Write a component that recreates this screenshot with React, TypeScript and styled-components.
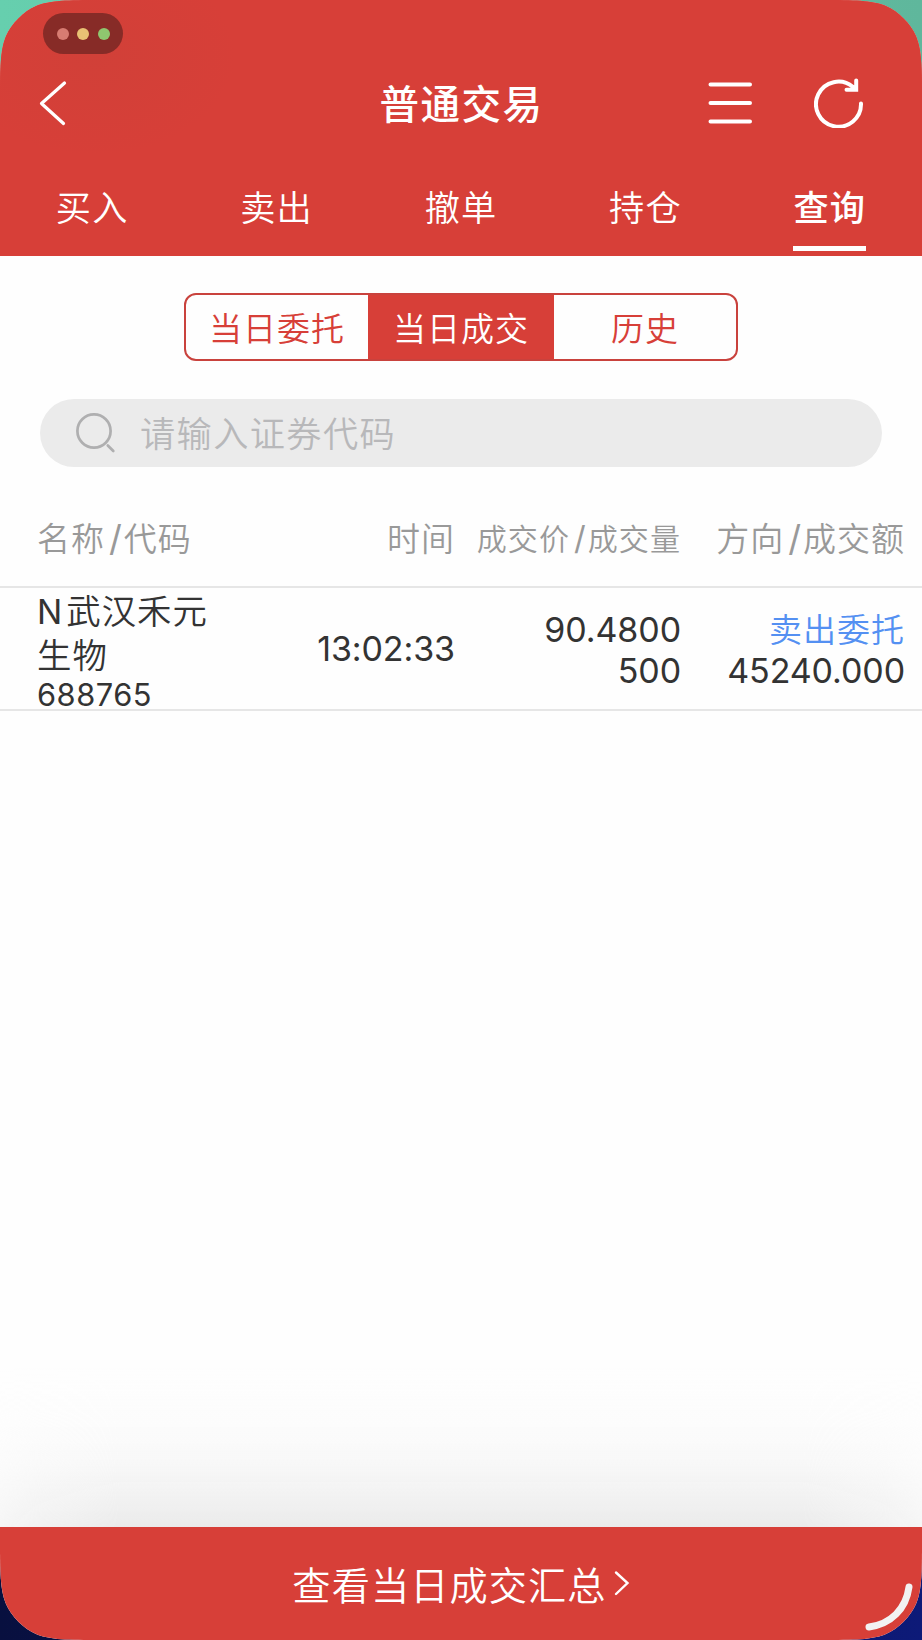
import React from "react";
import styled, { createGlobalStyle } from "styled-components";

const RED = "#d73f38";

const GlobalStyle = createGlobalStyle`
  * { box-sizing: border-box; }
  body { margin: 0; }
  button { font: inherit; letter-spacing: inherit; border: 0; padding: 0; background: none; color: inherit; }
`;

const Desktop = styled.div`
  width: 922px;
  height: 1640px;
  overflow: hidden;
  background:
    linear-gradient(90deg, #66cfae, #5fb79c) top / 100% 50% no-repeat,
    linear-gradient(90deg, #08103f, #0d1a78) bottom / 100% 50% no-repeat;
`;

const Window = styled.main`
  position: relative;
  display: flex;
  flex-direction: column;
  height: 1640px;
  background: #fefefe;
  color: #333;
  font-family: Inter, "Noto Sans CJK SC", sans-serif;
  clip-path: path("M0 95 C0 62 1 48 6 36 C11 24 24 11 36 6 C48 1 62 0 95 0 H827 C860 0 874 1 886 6 C898 11 911 24 916 36 C921 48 922 62 922 95 V1545 C922 1578 921 1592 916 1604 C911 1616 898 1629 886 1634 C874 1639 860 1640 827 1640 H95 C62 1640 48 1639 36 1634 C24 1629 11 1616 6 1604 C1 1592 0 1578 0 1545 Z");
`;

const Header = styled.header`
  height: 256px;
  flex: none;
  padding-top: 61px;
  color: #fff;
  background: radial-gradient(ellipse 140px 100px at 95px 55px, #d14038, ${RED}) ${RED};
`;

const NavBar = styled.div`
  display: grid;
  grid-template-columns: 1fr auto 1fr;
  grid-template-rows: 100%;
  align-items: center;
  height: 84px;
  padding: 0 58px 0 38px;
`;

const Title = styled.h1`
  margin: 0;
  padding: 5px 0 0 21px;
  font-size: 39.5px;
  font-weight: 500;
  letter-spacing: 1.5px;
  line-height: 79px;
`;

const NavButton = styled.button`
  display: flex;
`;

const Actions = styled.div`
  display: flex;
  justify-content: flex-end;
  align-items: center;
  gap: 62px;
`;

const Tabs = styled.nav`
  display: flex;
  height: 111px;
`;

const Tab = styled.button<{ $active?: boolean }>`
  flex: 1;
  display: flex;
  flex-direction: column;
  align-items: center;
  font-size: 35.2px;
  line-height: 50px;
  letter-spacing: 1.2px;
  padding-top: 38px;
  font-weight: ${(p) => (p.$active ? 500 : 350)};
  span {
    height: 68px;
    border-bottom: 5px solid ${(p) => (p.$active ? "#fff" : "transparent")};
  }
`;

const Segments = styled.div`
  display: flex;
  flex: none;
  width: 554px;
  height: 68px;
  margin: 37px auto 0;
  border: 2px solid #c9423d;
  border-radius: 12px;
  overflow: hidden;
`;

const Segment = styled.button<{ $active?: boolean }>`
  flex: ${(p) => (p.$active ? "0 0 186px" : "1")};
  padding-top: 4px;
  font-size: 33px;
  font-weight: 350;
  letter-spacing: 1px;
  line-height: 60px;
  color: ${(p) => (p.$active ? "#fff" : RED)};
  background: ${(p) => (p.$active ? RED : "transparent")};
`;

const SearchBox = styled.label`
  display: flex;
  flex: none;
  align-items: center;
  gap: 24px;
  height: 68px;
  margin: 38px 40px 0;
  padding-left: 36px;
  border-radius: 35px;
  background: #ebebeb;
`;

const Placeholder = styled.span`
  padding-top: 3px;
  color: #b8b8ba;
  font-size: 35.2px;
  font-weight: 350;
  letter-spacing: 1.4px;
  line-height: 65px;
`;

const Row = styled.div<{ $height: number }>`
  display: grid;
  flex: none;
  grid-template-columns: 37px 201px 217px 226px 224px 17px;
  grid-template-rows: 100%;
  align-items: center;
  height: ${(p) => p.$height}px;
  border-bottom: 2px solid #e6e6e6;
`;

const HeadCell = styled.div<{ $col: number; $small?: boolean }>`
  grid-column: ${(p) => p.$col};
  padding-top: 25px;
  text-align: ${(p) => (p.$col === 2 ? "left" : "right")};
  color: #999;
  font-size: ${(p) => (p.$small ? 30.1 : 33)}px;
  font-weight: 350;
  letter-spacing: 1px;
  white-space: nowrap;
  line-height: 44px;
`;

const Slash = styled.span`
  margin: 0 1px 0 4px;
  font-size: 1.08em;
  font-weight: 400;
  line-height: 1;
`;

const Cell = styled.div<{ $col: number }>`
  grid-column: ${(p) => p.$col};
  display: flex;
  flex-direction: column;
  padding-top: ${(p) => (p.$col === 2 ? 5 : p.$col === 3 ? 0 : 2)}px;
  align-items: ${(p) => (p.$col === 2 ? "flex-start" : "flex-end")};
  font-size: 34px;
  letter-spacing: -0.1px;
  white-space: nowrap;
`;

const Name = styled.span`
  font-size: 34.4px;
  font-weight: 350;
  line-height: 43px;
  letter-spacing: 1px;
`;

const Prefix = styled.span`
  margin-right: 3px;
  font-size: 33.5px;
  font-weight: 400;
`;

const Code = styled.span`
  font-size: 30.8px;
  line-height: 35px;
  letter-spacing: 0.5px;
`;

const Value = styled.span`
  line-height: 41px;
`;

const Direction = styled.span`
  padding-top: 1px;
  color: #5490f2;
  font-size: 33px;
  font-weight: 350;
  line-height: 40px;
  letter-spacing: 1px;
`;

const Shade = styled.div`
  height: 160px;
  margin-top: auto;
  background: linear-gradient(#ebebeb00, #ebebeb10 28%, #ebebeb30 47%, #ebebeb58 63%, #ebebebb0 83%, #ebebeb);
  mask-image: linear-gradient(90deg, #0006, #000a 4%, #000 13%, #000 87%, #000a 96%, #0006);
`;

const Footer = styled.footer`
  display: flex;
  flex: none;
  align-items: center;
  justify-content: center;
  gap: 7px;
  height: 113px;
  padding-bottom: 1px;
  color: #fff;
  background: ${RED};
  font-size: 38.2px;
  font-weight: 350;
  letter-spacing: 1.1px;
`;

const WindowDots = styled.div`
  position: absolute;
  left: 43px;
  top: 13px;
  display: flex;
  align-items: center;
  justify-content: center;
  gap: 8.5px;
  width: 80px;
  height: 41px;
  border-radius: 21px;
  background: #872b27;
`;

const Dot = styled.i<{ $color: string }>`
  width: 12px;
  height: 12px;
  border-radius: 50%;
  background: ${(p) => p.$color};
`;

const ResizeHandle = styled.svg`
  position: absolute;
  right: 0;
  bottom: 0;
`;

const tabs = ["买入", "卖出", "撤单", "持仓", "查询"];
const segments = ["当日委托", "当日成交", "历史"];

export default function App() {
  return (
    <Desktop>
      <GlobalStyle />
      <Window>
        <Header>
          <NavBar>
            <NavButton aria-label="返回">
              <svg width="30" height="46" fill="none" stroke="#fff" strokeWidth="3.2" strokeLinecap="round" strokeLinejoin="round">
                <path d="M26.500 3 3.500 23.500 25.500 43.500" />
              </svg>
            </NavButton>
            <Title>普通交易</Title>
            <Actions>
              <NavButton aria-label="菜单">
                <svg width="44" height="44" fill="none" stroke="#fff" strokeWidth="4" strokeLinecap="round">
                  <path d="M2.500 3.500H42M2.500 22H42M2.500 40.500H42" />
                </svg>
              </NavButton>
              <NavButton aria-label="刷新">
                <svg width="50" height="50" fill="none" stroke="#fff" strokeWidth="4" strokeLinecap="round">
                  <path d="M47 25.500A22.500 22.500 0 1 1 38.800 8.800L41 11M42.200 2.500V11.800H32.500" />
                </svg>
              </NavButton>
            </Actions>
          </NavBar>
          <Tabs>
            {tabs.map((t) => (
              <Tab key={t} $active={t === "查询"}><span>{t}</span></Tab>
            ))}
          </Tabs>
        </Header>
        <Segments>
          {segments.map((s) => (
            <Segment key={s} $active={s === "当日成交"}>{s}</Segment>
          ))}
        </Segments>
        <SearchBox>
          <svg width="40" height="40" fill="none" stroke="#afafb0" strokeWidth="2.7" strokeLinecap="round">
            <circle cx="18" cy="18" r="16.600" />
            <path d="M31.800 32.500l5.500 5.500" />
          </svg>
          <Placeholder>请输入证券代码</Placeholder>
        </SearchBox>
        <Row $height={121}>
          <HeadCell $col={2}>名称<Slash>/</Slash>代码</HeadCell>
          <HeadCell $col={3}>时间</HeadCell>
          <HeadCell $col={4} $small>成交价<Slash>/</Slash>成交量</HeadCell>
          <HeadCell $col={5}>方向<Slash>/</Slash>成交额</HeadCell>
        </Row>
        <Row $height={123}>
          <Cell $col={2}>
            <Name><Prefix>N</Prefix>武汉禾元<br />生物</Name>
            <Code>688765</Code>
          </Cell>
          <Cell $col={3}><Value>13:02:33</Value></Cell>
          <Cell $col={4}><Value>90.4800</Value><Value>500</Value></Cell>
          <Cell $col={5}><Direction>卖出委托</Direction><Value>45240.000</Value></Cell>
        </Row>
        <Shade />
        <Footer>
          <span>查看当日成交汇总</span>
          <svg width="16" height="26" fill="none" stroke="#fff" strokeWidth="2.4" strokeLinecap="round">
            <path d="M2 2.500 13.500 13 2 24" />
          </svg>
        </Footer>
        <WindowDots>
          <Dot $color="#d77c72" />
          <Dot $color="#e9c274" />
          <Dot $color="#8fc66f" />
        </WindowDots>
        <ResizeHandle width="60" height="60" fill="none" stroke="#f2f2f2" strokeWidth="7" strokeLinecap="round">
          <path d="M47 7C44 29 29 44 7 47" />
        </ResizeHandle>
      </Window>
    </Desktop>
  );
}
